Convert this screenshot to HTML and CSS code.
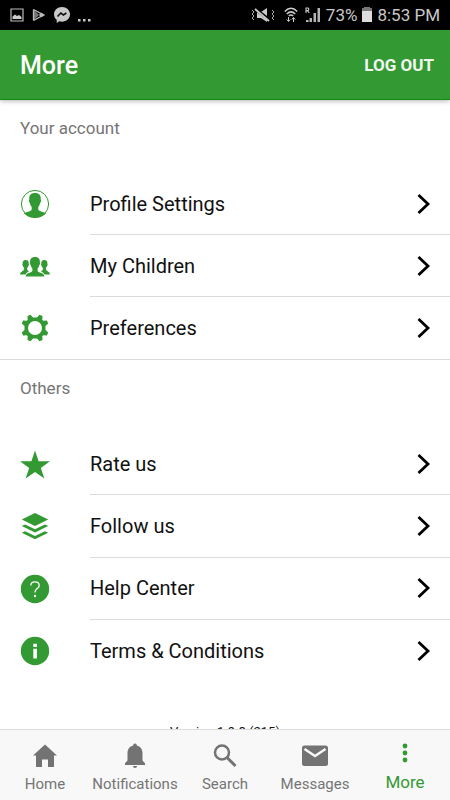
FILE: index.html
```html
<!DOCTYPE html>
<html lang="en">
<head>
<meta charset="utf-8">
<meta name="viewport" content="width=device-width, initial-scale=1">
<title>More</title>
<link rel="stylesheet" href="styles.css">
</head>
<body>
<svg class="sprite" aria-hidden="true">
  <symbol id="chevron" viewBox="0 0 14 22"><path d="M1.500 2 11 11 1.500 20" fill="none" stroke="#000" stroke-width="2.800"/></symbol>
</svg>
<div class="status">
  <div class="status-group">
    <svg width="14" height="14" viewBox="0 0 14 14"><path d="M1 1h12v12H1z" fill="none" stroke="#bbb" stroke-width="1.200"/><path d="M2.500 11V8.500L5 6.500l2 1.500 2-1 2.500 2V11z" fill="#ccc"/></svg>
    <svg width="14" height="14" viewBox="0 0 14 14"><path d="M1 1v12l6-6z" fill="#777"/><path d="M1.500 1.500 11.500 7l-10 5.500M1.500 1.500v11" fill="none" stroke="#bbb" stroke-width="1.300"/><path d="m9 4.500 4 2.500-4 2.500L7 7z" fill="#bbb"/></svg>
    <svg width="16" height="16" viewBox="0 0 16 16"><path d="M8 0C3.500 0 0 3.200 0 7.300c0 2.300 1 4.200 2.700 5.500V16l2.600-1.700c.9.200 1.700.4 2.700.4 4.500 0 8-3.300 8-7.400S12.500 0 8 0z" fill="#c8c8c8"/><path d="m3.500 9.500 3.300-3.500 2.600 2 3-2" fill="none" stroke="#111" stroke-width="1.600"/></svg>
    <svg width="14" height="14" viewBox="0 0 14 14"><path d="M0 11h2.500v2.500H0zM5 11h2.500v2.500H5zM10 11h2.500v2.500H10z" fill="#c8c8c8"/></svg>
  </div>
  <div class="status-group status-right">
    <svg width="24" height="16" viewBox="0 0 24 16"><path d="M6 5h4l6-4v14l-6-4H6z" fill="#c8c8c8"/><path d="m3 1 17 13" stroke="#000" stroke-width="3"/><path d="m4 2 14 12" stroke="#c8c8c8" stroke-width="1.800"/><path d="m1 3 2 2-2 2 2 2-2 2 2 2M21 3l2 2-2 2 2 2-2 2 2 2" fill="none" stroke="#aaa"/></svg>
    <svg class="wifi" width="14" height="16" viewBox="0 0 14 16"><path d="M.8 4.500q6.200-6.500 12.400 0M2.800 7q4.200-4.200 8.400 0M4.800 9q2.200-2 4.400 0" fill="none" stroke="#ccc" stroke-width="1.500"/><path d="M4.500 10v4M2.800 12.500l1.700 2 1.700-2M9.500 15v-4M7.800 12.500l1.700-2 1.700 2" fill="none" stroke="#ccc"/></svg>
    <svg width="16" height="16" viewBox="0 0 16 16"><path d="M1 15v-2h2.500v2zM4.500 15v-4H7v4zM8.500 15V6H11v9zM12.500 15V1h2.500v14z" fill="#b4b4b4"/><path d="M1 6V1h2q1.500 1.300 0 2.600H1M2.500 3.600 4.300 6" fill="none" stroke="#ccc" stroke-width="1.100"/></svg>
    <span>73%</span>
    <svg width="10" height="16" viewBox="0 0 10 16"><path d="M2 0h6v1h2v3H0V1h2z" fill="#777"/><path d="M0 4h10v11H0z" fill="#ddd"/></svg>
    <span>8:53 PM</span>
  </div>
</div>

<header class="header">
  <h1>More</h1>
  <button type="button">LOG OUT</button>
</header>

<main class="content">
  <section>
    <h2>Your account</h2>
    <ul class="list list-closed">
      <li><a href="#profile">
        <svg class="icon" viewBox="0 0 30 30"><circle cx="15" cy="15" r="13.600" fill="#fff" stroke="#339933" stroke-width="1"/><path d="M15 4c-4.300 0-6.200 2.400-5.700 6.500-.7.400-.3 3 .6 3.400.4 2 1 3.100 1.800 3.900v3c-1 1.700-4.700 1.900-7.700 3.700C6.700 27.300 10.700 28.700 15 28.700s8.300-1.400 11-4.200c-3-1.800-6.700-2-7.700-3.700v-3c.8-.8 1.400-1.900 1.800-3.900.9-.4 1.300-3 .6-3.400C21.200 6.400 19.300 4 15 4z" fill="#339933"/></svg>
        <span class="row"><span>Profile Settings</span><svg class="chevron"><use href="#chevron"/></svg></span></a></li>
      <li><a href="#children">
        <svg class="icon" viewBox="0 0 30 30"><g fill="#339933"><path d="M5.700 9C3.200 9 2.300 10.800 2.600 13c-.5.300-.2 1.500.3 1.700.2 1.100.7 1.700 1.200 2.100v1.600C2.800 20.600.2 20.500 0 23.500h5.500c.8-1.700 2.400-2.700 3.600-3.300-1-.5-1.700-.8-1.900-1.400v-2c.5-.4 1-1 1.200-2.100.5-.2.800-1.400.3-1.700C9 10.800 8.200 9 5.700 9z"/><path transform="matrix(-1 0 0 1 30 0)" d="M5.700 9C3.200 9 2.300 10.800 2.600 13c-.5.300-.2 1.500.3 1.700.2 1.100.7 1.700 1.200 2.100v1.600C2.800 20.600.2 20.500 0 23.500h5.500c.8-1.700 2.400-2.700 3.600-3.300-1-.5-1.700-.8-1.900-1.400v-2c.5-.4 1-1 1.200-2.100.5-.2.800-1.400.3-1.700C9 10.800 8.200 9 5.700 9z"/><path d="M15 6c-3.900 0-5.200 2.400-4.800 5.600-.7.400-.3 2.200.6 2.600.3 1.600.9 2.500 1.600 3.200V20c-1.600 2.300-6.300 1.400-6.800 5.500h18.800c-.5-4.100-5.200-3.200-6.800-5.500v-2.600c.7-.7 1.300-1.600 1.600-3.200.9-.4 1.300-2.200.6-2.600C20.200 8.400 18.900 6 15 6z"/></g></svg>
        <span class="row"><span>My Children</span><svg class="chevron"><use href="#chevron"/></svg></span></a></li>
      <li><a href="#preferences">
        <svg class="icon" viewBox="0 0 30 30"><path fill="#339933" fill-rule="evenodd" d="m13 4.500-2.500-2.700-3 1.300L7.700 6.800 6.800 7.700 3.100 7.500 1.800 10.500 4.500 13V17L1.800 19.500l1.300 3 3.700-.2.900.9-.2 3.700 3 1.300L13 25.500h4l2.500 2.700 3-1.300-.2-3.700.9-.9 3.700.2 1.300-3L25.500 17v-4l2.700-2.500-1.300-3-3.700.2-.9-.9.200-3.700-3-1.300L17 4.500zM15 8a7 7 0 1 1 0 14 7 7 0 0 1 0-14z"/></svg>
        <span class="row"><span>Preferences</span><svg class="chevron"><use href="#chevron"/></svg></span></a></li>
    </ul>
  </section>
  <section>
    <h2>Others</h2>
    <ul class="list">
      <li><a href="#rate">
        <svg class="icon" viewBox="0 0 30 30"><path fill="#339933" d="m15 1.500 3.600 10.700H30l-9.200 6.700 3.600 10.600L15 23l-9.400 6.500 3.600-10.600L0 12.200h11.400z"/></svg>
        <span class="row"><span>Rate us</span><svg class="chevron"><use href="#chevron"/></svg></span></a></li>
      <li><a href="#follow">
        <svg class="icon" viewBox="0 0 30 30"><path fill="#339933" d="M15 2 28.200 8.500 15 15 1.800 8.500zM1.800 15l3.300-1.600L15 18.200l9.900-4.800 3.300 1.600L15 21.500zM1.800 21.800l3.300-1.600L15 25l9.900-4.800 3.300 1.600L15 28.300z"/></svg>
        <span class="row"><span>Follow us</span><svg class="chevron"><use href="#chevron"/></svg></span></a></li>
      <li><a href="#help">
        <svg class="icon" viewBox="0 0 30 30"><circle cx="15" cy="15" r="14.200" fill="#339933"/><path d="M10.800 11.500c0-2.300 1.700-3.700 4.200-3.700s4.200 1.400 4.200 3.600c0 3.300-4.300 3.200-4.300 7.100" fill="none" stroke="#fff" stroke-width="1.300"/><circle cx="15" cy="22" r="1.200" fill="#fff"/></svg>
        <span class="row"><span>Help Center</span><svg class="chevron"><use href="#chevron"/></svg></span></a></li>
      <li><a href="#terms">
        <svg class="icon" viewBox="0 0 30 30"><circle cx="15" cy="15" r="14.200" fill="#339933"/><path d="M13.300 7.800h3.600V11h-3.600zM13.300 12.800h3.600v9.700h-3.600z" fill="#fff"/></svg>
        <span class="row"><span>Terms &amp; Conditions</span><svg class="chevron"><use href="#chevron"/></svg></span></a></li>
    </ul>
  </section>
  <p class="version">Version 1.9.8 (215)</p>
</main>

<nav class="tabs">
  <a href="#home"><svg viewBox="0 0 28 28"><path fill="#737373" d="M14 2.500 26 13.500h-3V25h-6v-7.500h-6V25H5V13.500H2z"/></svg><span>Home</span></a>
  <a href="#notifications"><svg viewBox="0 0 28 28"><path fill="#737373" d="M14 1.500c-1.200 0-1.800.8-1.800 2C8.500 4.300 6.500 7.300 6.500 11v7.500L4 21.300V23h20v-1.700l-2.500-2.800V11c0-3.700-2-6.700-5.700-7.500 0-1.200-.6-2-1.800-2zM11.800 24h4.400q-.4 2-2.200 2t-2.200-2z"/></svg><span>Notifications</span></a>
  <a href="#search"><svg viewBox="0 0 28 28"><circle cx="11" cy="10.500" r="7" fill="none" stroke="#737373" stroke-width="2.500"/><path d="m16 15.500 8.500 8.500" stroke="#737373" stroke-width="3"/></svg><span>Search</span></a>
  <a href="#messages"><svg viewBox="0 0 28 28"><rect x="1" y="3.500" width="26" height="20.500" rx="2.500" fill="#737373"/><path d="m3.500 7 10.500 7 10.500-7" fill="none" stroke="#f8f8f8" stroke-width="2.500"/></svg><span>Messages</span></a>
  <a class="active" href="#more" aria-current="page"><svg viewBox="0 0 28 28"><g fill="#339933"><circle cx="14" cy="4" r="2.400"/><circle cx="14" cy="11" r="2.400"/><circle cx="14" cy="18" r="2.400"/></g></svg><span>More</span></a>
</nav>
</body>
</html>
```
FILE: styles.css
```css
* { box-sizing: border-box; }
body {
  margin: 0;
  height: 100vh;
  display: flex;
  flex-direction: column;
  background: #fff;
  color: #111;
  font-family: Roboto, "Liberation Sans", sans-serif;
}
h1, h2, p, ul { margin: 0; padding: 0; font-weight: 400; }
a { color: inherit; text-decoration: none; }
svg { flex: none; display: block; }
.sprite { position: absolute; width: 0; height: 0; }

.status {
  flex: none;
  height: 30px;
  padding: 0 10px;
  display: flex;
  align-items: center;
  justify-content: space-between;
  background: #000;
  color: #c8c8c8;
  font-size: 18px;
}
.status-group { display: flex; align-items: center; gap: 8px; }
.status-right { gap: 5px; font-size: 17px; }
.wifi { margin: 0 2px 0 4px; }

.header {
  flex: none;
  height: 70px;
  padding: 0 16px 0 20px;
  display: flex;
  align-items: center;
  justify-content: space-between;
  position: relative;
  background: #339933;
  border-bottom: 1px solid #108a10;
  box-shadow: 0 1px 5px rgba(0, 0, 0, .3);
  color: #fff;
}
.header h1 { font-size: 25px; font-weight: 500; padding-top: 2px; }
.header button {
  padding: 0;
  border: 0;
  background: none;
  color: #f2f7f2;
  font: 700 17px Roboto, "Liberation Sans", sans-serif;
}

.content { flex: 1; min-height: 0; overflow: hidden; }
.content h2 {
  height: 73px;
  padding: 16px 20px;
  color: #757575;
  font-size: 17px;
  line-height: 24px;
}
.list {
  min-height: 249px;
  display: grid;
  grid-auto-rows: 1fr;
  list-style: none;
}
.list-closed { min-height: 187px; border-bottom: 1px solid #d9d9d9; }
.list a {
  height: 100%;
  padding-left: 20px;
  display: flex;
  align-items: center;
  gap: 40px;
}
.icon { width: 30px; height: 30px; }
.row {
  flex: 1;
  height: 100%;
  padding-right: 19px;
  display: flex;
  align-items: center;
  justify-content: space-between;
  border-bottom: 1px solid #dcdcdc;
  font-size: 20px;
}
.list li:last-child .row { border-bottom: 0; }
.chevron { width: 14px; height: 22px; }
.version { padding-top: 40px; text-align: center; font-size: 13px; line-height: 20px; }

.tabs {
  flex: none;
  height: 71px;
  display: grid;
  grid-template-columns: repeat(5, 1fr);
  background: #f8f8f8;
  border-top: 1px solid #dcdcdc;
  color: #757575;
  font-size: 15px;
}
.tabs a {
  padding-top: 12px;
  display: flex;
  flex-direction: column;
  align-items: center;
  gap: 4px;
  line-height: 20px;
}
.tabs svg { width: 28px; height: 28px; }
.tabs .active { color: #339933; font-size: 17px; gap: 2px; }
```
